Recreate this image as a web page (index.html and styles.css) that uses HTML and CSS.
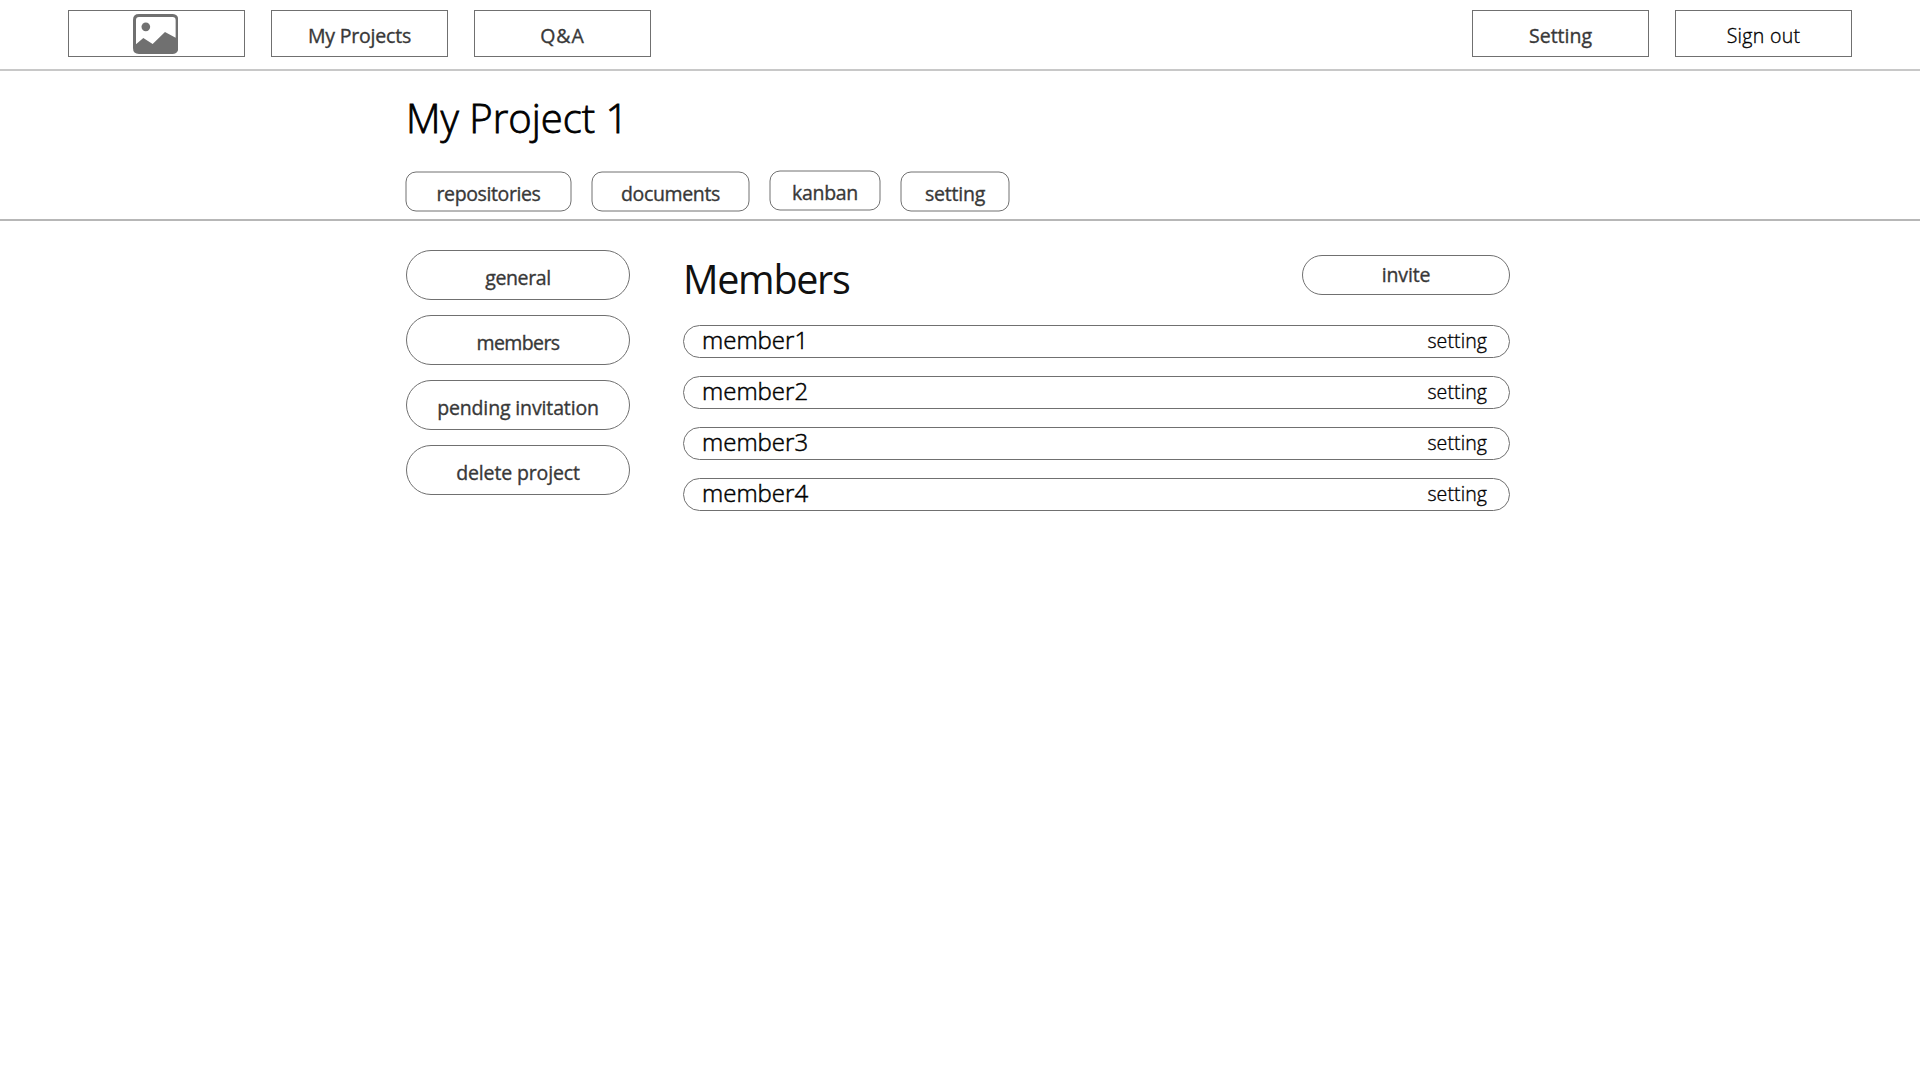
FILE: index.html
```
<!DOCTYPE html>
<html lang="en">
<head>
<meta charset="utf-8">
<title>My Project 1</title>
<link rel="stylesheet" href="styles.css">
</head>
<body>
<header class="topbar">
  <nav class="topbar-group">
    <a class="box">
      <svg class="logo" viewBox="0 0 136 120" aria-hidden="true">
        <path fill="#707070" fill-rule="evenodd" d="M18 0H118Q136 0 136 18V102Q136 120 118 120H18Q0 120 0 102V18Q0 0 18 0ZM18 9Q9 9 9 18V91L31 72L59 90L96 54L128 71V18Q128 9 119 9Z"/>
        <circle cx="38.500" cy="38.500" r="13" fill="#707070"/>
      </svg>
    </a>
    <a class="box my-projects">My Projects</a>
    <a class="box qa">Q&amp;A</a>
  </nav>
  <nav class="topbar-group">
    <a class="box">Setting</a>
    <a class="box sign-out">Sign out</a>
  </nav>
</header>

<section class="project">
  <h1 class="project-title">My Project 1</h1>
  <nav class="tabs">
    <a class="tab repositories"><svg class="outline"><rect class="outline-rect" x="1" y="1" rx="10"/></svg>repositories</a>
    <a class="tab documents"><svg class="outline"><rect class="outline-rect" x="1" y="1" rx="10"/></svg>documents</a>
    <a class="tab kanban"><svg class="outline"><rect class="outline-rect" x="1" y="1" rx="10"/></svg>kanban</a>
    <a class="tab setting"><svg class="outline"><rect class="outline-rect" x="1" y="1" rx="10"/></svg>setting</a>
  </nav>
</section>

<div class="content">
  <nav class="side">
    <a class="side-item general">general</a>
    <a class="side-item side-members">members</a>
    <a class="side-item">pending invitation</a>
    <a class="side-item">delete project</a>
  </nav>
  <main class="members">
    <div class="members-head">
      <h2 class="members-title">Members</h2>
      <a class="invite">invite</a>
    </div>
    <ul class="member-list">
      <li class="member"><span class="member-name">member1</span><a class="member-setting">setting</a></li>
      <li class="member"><span class="member-name">member2</span><a class="member-setting">setting</a></li>
      <li class="member"><span class="member-name">member3</span><a class="member-setting">setting</a></li>
      <li class="member"><span class="member-name">member4</span><a class="member-setting">setting</a></li>
    </ul>
  </main>
</div>
</body>
</html>
```
FILE: styles.css
```
* { box-sizing: border-box; }

body {
  margin: 0;
  background: #fff;
  color: #383838;
  font: 400 19.5px/24px "Open Sans", "Noto Sans", sans-serif;
  -webkit-text-stroke: 0.35px;
}

/* top bar */
.topbar {
  display: flex;
  justify-content: space-between;
  height: 71px;
  padding: 10px 68px 0;
  border-bottom: 2px solid #c8c8c8;
}
.topbar-group { display: flex; gap: 26px; }
.box {
  display: flex;
  align-items: center;
  justify-content: center;
  width: 177px;
  height: 47px;
  padding-top: 4px;
  border: 1px solid #707070;
}
.logo { width: 45.300px; height: 40px; margin: -3px 2px 0 0; }
.my-projects { letter-spacing: -0.2px; }
.qa { letter-spacing: 0.9px; }
.sign-out { color: #000; font-weight: 300; letter-spacing: 0.3px; }

/* project header */
.project {
  height: 150px;
  padding: 23px 0 0 406px;
  border-bottom: 2px solid #b7b7b7;
}
.project-title {
  margin: 0;
  color: #000;
  font-weight: 300;
  font-size: 40px;
  line-height: 48px;
  letter-spacing: 0;
  -webkit-text-stroke: 0.8px;
}
.tabs { display: flex; margin: 29px 0 0 -1px; }
.tab {
  position: relative;
  display: flex;
  align-items: center;
  justify-content: center;
  height: 41px;
  padding-top: 4px;
}
.outline { position: absolute; inset: 0; width: 100%; height: 100%; }
.outline-rect {
  width: calc(100% - 2px);
  height: calc(100% - 2px);
  fill: none;
  stroke: #707070;
}
.repositories { width: 167px; letter-spacing: -0.38px; }
.documents { width: 159px; margin-left: 19px; letter-spacing: -0.33px; }
.kanban { width: 112px; margin: -1px 0 0 19px; letter-spacing: -0.3px; }
.setting { width: 110px; margin-left: 19px; letter-spacing: -0.2px; }

/* content */
.content { display: flex; gap: 53px; padding: 29px 0 0 406px; }
.side { display: flex; flex-direction: column; gap: 15px; width: 224px; }
.side-item {
  display: flex;
  align-items: center;
  justify-content: center;
  height: 50px;
  padding-top: 5px;
  border: 1px solid #707070;
  border-radius: 25px;
  letter-spacing: -0.14px;
}
.general { letter-spacing: -0.37px; }
.side-members { letter-spacing: -0.6px; }

.members { width: 827px; padding-top: 5px; }
.members-head { display: flex; justify-content: space-between; height: 70px; }
.members-title {
  margin: 0;
  color: #111;
  font-weight: 400;
  font-size: 39.500px;
  line-height: 48px;
  letter-spacing: -1.300px;
  -webkit-text-stroke: 0;
}
.invite {
  display: flex;
  align-items: center;
  justify-content: center;
  width: 208px;
  height: 40px;
  border: 1px solid #707070;
  border-radius: 20px;
  letter-spacing: -0.16px;
}
.member-list {
  display: flex;
  flex-direction: column;
  gap: 18px;
  margin: 0;
  padding: 0;
  list-style: none;
}
.member {
  display: flex;
  align-items: center;
  justify-content: space-between;
  height: 33px;
  padding: 0 22px 4px 18px;
  border: 1px solid #707070;
  border-radius: 17px;
  color: #000;
  font-weight: 300;
}
.member-name { font-size: 24px; -webkit-text-stroke: 0.5px; }
.member-setting { padding-top: 2px; letter-spacing: 0.1px; }
```
